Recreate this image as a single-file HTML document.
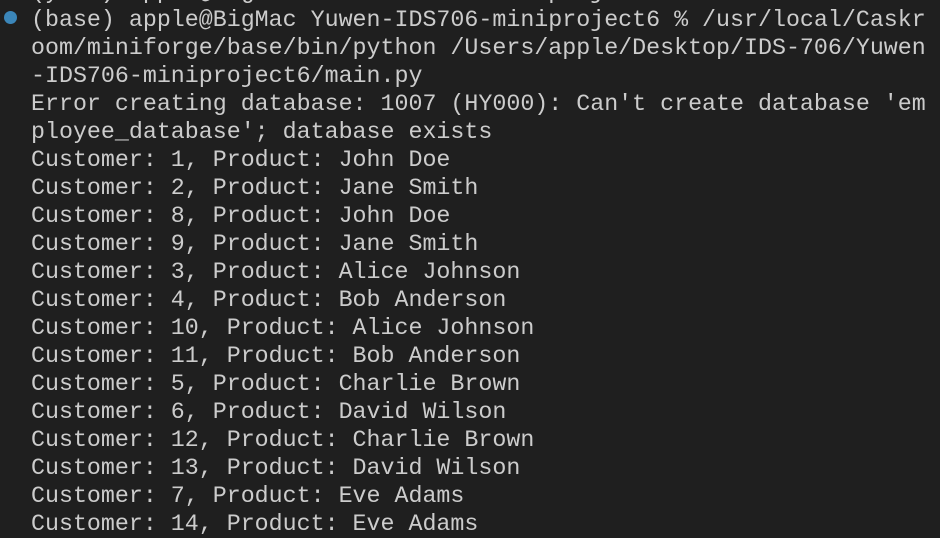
<!DOCTYPE html>
<html><head><meta charset="utf-8"><style>
html,body{margin:0;padding:0;background:#1f1f1f;width:940px;height:534px;overflow:hidden}
.t{position:absolute;left:31px;top:-22px;font-family:"Liberation Mono",monospace;font-size:23.3px;line-height:28px;color:#cccccc;white-space:pre}
.dot{position:absolute;left:4px;top:11px;width:13px;height:13px;border-radius:50%;background:#3b86b9}
</style></head><body>
<div class="dot"></div>
<div class="t">(yenv) apple@BigMac Yuwen-IDS706-miniproject6 %
(base) apple@BigMac Yuwen-IDS706-miniproject6 % /usr/local/Caskr
oom/miniforge/base/bin/python /Users/apple/Desktop/IDS-706/Yuwen
-IDS706-miniproject6/main.py
Error creating database: 1007 (HY000): Can't create database 'em
ployee_database'; database exists
Customer: 1, Product: John Doe
Customer: 2, Product: Jane Smith
Customer: 8, Product: John Doe
Customer: 9, Product: Jane Smith
Customer: 3, Product: Alice Johnson
Customer: 4, Product: Bob Anderson
Customer: 10, Product: Alice Johnson
Customer: 11, Product: Bob Anderson
Customer: 5, Product: Charlie Brown
Customer: 6, Product: David Wilson
Customer: 12, Product: Charlie Brown
Customer: 13, Product: David Wilson
Customer: 7, Product: Eve Adams
Customer: 14, Product: Eve Adams</div>
</body></html>
